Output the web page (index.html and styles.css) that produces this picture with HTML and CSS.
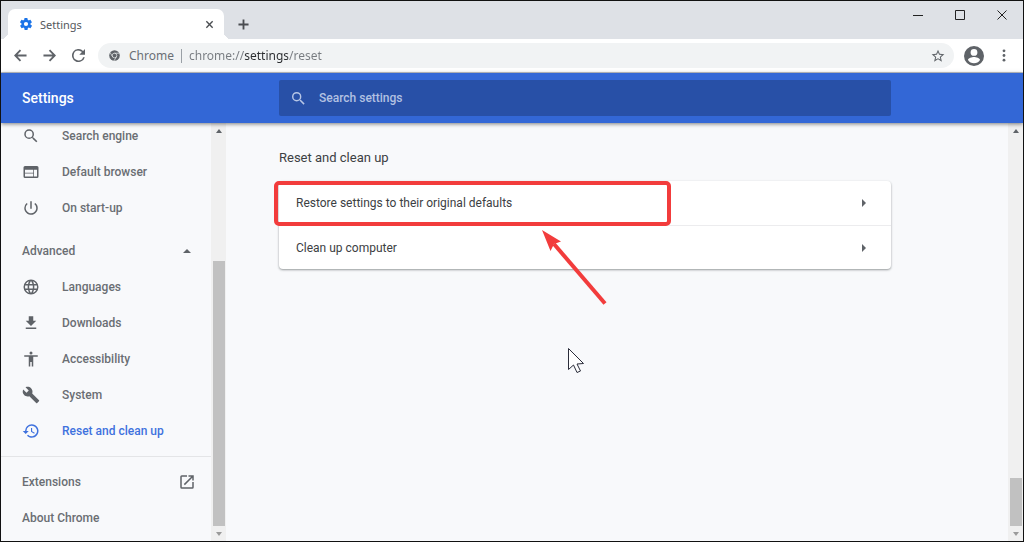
FILE: index.html
```html
<!DOCTYPE html>
<html lang="en">
<head>
<meta charset="UTF-8" />
<meta name="viewport" content="width=device-width, initial-scale=1" />
<title>Settings</title>
<link rel="stylesheet" href="styles.css">
</head>
<body>
<div class="window">
    <div class="titlebar">
        <div class="tab">
            <svg class="tab-icon" viewBox="2 2 20 20" aria-hidden="true"><path d="M19.4 13a7.500 7.500 0 0 0 0-2l2.100-1.600a.5.5 0 0 0 .1-.7l-2-3.400a.5.5 0 0 0-.6-.2l-2.500 1a7.300 7.300 0 0 0-1.700-1l-.4-2.700a.5.5 0 0 0-.5-.4h-4a.5.5 0 0 0-.5.4l-.4 2.700a7.300 7.300 0 0 0-1.700 1l-2.500-1a.5.5 0 0 0-.6.2l-2 3.400a.5.5 0 0 0 .1.700L4.600 11a7.500 7.500 0 0 0 0 2l-2.100 1.600a.5.5 0 0 0-.1.700l2 3.400a.5.5 0 0 0 .6.2l2.500-1a7.300 7.300 0 0 0 1.700 1l.4 2.700a.5.5 0 0 0 .5.4h4a.5.5 0 0 0 .5-.4l.4-2.700a7.300 7.300 0 0 0 1.700-1l2.500 1a.5.5 0 0 0 .6-.2l2-3.400a.5.5 0 0 0-.1-.7zM12 15.500a3.500 3.500 0 1 1 0-7 3.500 3.500 0 0 1 0 7z"/></svg>
            <span class="tab-title">Settings</span>
            <button class="tab-close" aria-label="Close tab"><svg class="stroke" viewBox="0 0 10 10"><path d="M1.500 1.500l7 7M8.500 1.500l-7 7"/></svg></button>
        </div>
        <button class="new-tab" aria-label="New tab"><svg class="stroke" viewBox="0 0 12 12"><path d="M6 .5v11M.5 6h11"/></svg></button>
        <div class="window-buttons">
            <button aria-label="Minimise"><svg viewBox="0 0 10 10"><path d="M0 5.500h10"/></svg></button>
            <button aria-label="Maximise"><svg viewBox="0 0 10 10"><path d="M.5.5h9v9h-9z"/></svg></button>
            <button aria-label="Close"><svg viewBox="0 0 10 10"><path d="M.5.5l9 9M9.500.5l-9 9"/></svg></button>
        </div>
    </div>

    <div class="toolbar">
        <button class="tool" aria-label="Back"><svg class="stroke" viewBox="0 0 14 14"><path d="M13.500 7H1.500M7 1.300L1.300 7 7 12.700"/></svg></button>
        <button class="tool" aria-label="Forward"><svg class="stroke" viewBox="0 0 14 14"><path d="M.5 7h12M7 1.300L12.700 7 7 12.700"/></svg></button>
        <button class="tool" aria-label="Reload"><svg viewBox="4 4 16 16"><path d="M17.650 6.350A8 8 0 1 0 19.730 14h-2.080A6 6 0 1 1 12 6c1.660 0 3.140.69 4.220 1.780L13 11h7V4z"/></svg></button>
        <div class="omnibox">
            <svg class="chrome-icon" viewBox="0 0 24 24" aria-hidden="true">
                <circle cx="12" cy="12" r="11.500" fill="#5f6368"/>
                <circle cx="12" cy="12" r="5" fill="none" stroke="#f1f3f4" stroke-width="1.500"/>
                <path d="M12 7h10.500M7.700 14.500L2.500 5.700M16.300 14.500L11 23.500" stroke="#f1f3f4" stroke-width="1.500"/>
            </svg>
            <label class="scheme" for="address">Chrome</label>
            <input class="address" id="address" type="text" value="chrome://settings/reset" spellcheck="false">
            <button class="star" aria-label="Bookmark this page"><svg viewBox="1 1 22 22"><path d="M22 9.240l-7.190-.62L12 2 9.190 8.630 2 9.240l5.460 4.730L5.820 21 12 17.270 18.180 21l-1.630-7.030zM12 15.400l-3.760 2.270 1-4.280-3.320-2.880 4.380-.38L12 6.100l1.710 4.040 4.380.38-3.320 2.880 1 4.280z"/></svg></button>
        </div>
        <button class="profile" aria-label="Profile"><svg viewBox="2 2 20 20"><path d="M12 2a10 10 0 1 0 0 20 10 10 0 0 0 0-20zm0 3a3.400 3.400 0 1 1 0 6.800A3.400 3.400 0 0 1 12 5zm0 14.200a7.200 7.200 0 0 1-6-3.220c.03-1.990 4-3.080 6-3.080s5.970 1.090 6 3.080a7.200 7.200 0 0 1-6 3.220z"/></svg></button>
        <button class="more" aria-label="Menu"><svg viewBox="0 0 4 14"><circle cx="2" cy="2" r="1.500"/><circle cx="2" cy="7" r="1.500"/><circle cx="2" cy="12" r="1.500"/></svg></button>
    </div>

    <header class="header">
        <h1>Settings</h1>
        <div class="search">
            <label for="search" aria-label="Search settings"><svg viewBox="3 3 18 18"><path d="M15.500 14h-.79l-.28-.27A6.470 6.470 0 0 0 16 9.500 6.500 6.500 0 1 0 9.500 16c1.610 0 3.090-.59 4.230-1.570l.27.28v.79l5 4.990L20.490 19zm-6 0a4.500 4.500 0 1 1 0-9 4.500 4.500 0 0 1 0 9z"/></svg></label>
            <input id="search" type="text" placeholder="Search settings">
        </div>
    </header>

    <div class="content">
        <nav class="sidebar">
            <div class="menu">
                <a href="#search-engine"><svg viewBox="0 0 24 24"><path d="M15.500 14h-.79l-.28-.27A6.470 6.470 0 0 0 16 9.500 6.500 6.500 0 1 0 9.500 16c1.610 0 3.090-.59 4.230-1.570l.27.28v.79l5 4.990L20.490 19zm-6 0a4.500 4.500 0 1 1 0-9 4.500 4.500 0 0 1 0 9z"/></svg>Search engine</a>
                <a href="#browser"><svg viewBox="0 0 24 24"><path d="M20 4H4a2 2 0 0 0-2 2v12a2 2 0 0 0 2 2h16a2 2 0 0 0 2-2V6a2 2 0 0 0-2-2zm-5 14H4v-4h11zm0-5H4V9h11zm5 5h-4V9h4z"/></svg>Default browser</a>
                <a href="#startup"><svg viewBox="0 0 24 24"><path d="M13 3h-2v10h2zm4.830 2.170l-1.420 1.420A6.920 6.920 0 0 1 19 12a7 7 0 1 1-11.420-5.420L6.170 5.170A8.930 8.930 0 0 0 3 12a9 9 0 1 0 14.830-6.830z"/></svg>On start-up</a>
                <button class="advanced" aria-expanded="true">Advanced<span class="up"></span></button>
                <a href="#languages"><svg viewBox="0 0 24 24"><path d="M11.990 2a10 10 0 1 0 .02 20 10 10 0 0 0-.02-20zm6.930 6h-2.950a15.650 15.650 0 0 0-1.380-3.560A8.030 8.030 0 0 1 18.920 8zM12 4.040c.83 1.200 1.480 2.530 1.910 3.960h-3.820c.43-1.430 1.080-2.760 1.910-3.960zM4.260 14a8.200 8.200 0 0 1 0-4h3.380a16.500 16.500 0 0 0 0 4zm.82 2h2.950c.32 1.250.78 2.450 1.380 3.560A7.990 7.990 0 0 1 5.080 16zm2.950-8H5.080a7.990 7.990 0 0 1 4.330-3.560A15.650 15.650 0 0 0 8.030 8zM12 19.960A14 14 0 0 1 10.090 16h3.820A14 14 0 0 1 12 19.960zM14.340 14H9.660a14.700 14.700 0 0 1 0-4h4.680a14.700 14.700 0 0 1 0 4zm.25 5.560c.6-1.110 1.060-2.310 1.380-3.560h2.950a8.030 8.030 0 0 1-4.330 3.560zM16.360 14a16.500 16.500 0 0 0 0-4h3.380a8.200 8.200 0 0 1 0 4z"/></svg>Languages</a>
                <a href="#downloads"><svg viewBox="0 0 24 24"><path d="M19 9h-4V3H9v6H5l7 7zM5 18v2h14v-2z"/></svg>Downloads</a>
                <a href="#accessibility"><svg viewBox="0 0 24 24"><path d="M12 2a2 2 0 1 1 0 4 2 2 0 0 1 0-4zm9 7h-6v13h-2v-6h-2v6H9V9H3V7h18z"/></svg>Accessibility</a>
                <a href="#system"><svg viewBox="0 0 24 24"><path d="M22.700 19l-9.100-9.100c.9-2.300.4-5-1.500-6.900-2-2-5-2.400-7.400-1.300L9 6 6 9 1.600 4.700C.4 7.100.9 10.100 2.900 12.100c1.900 1.900 4.600 2.400 6.900 1.500l9.100 9.100c.4.4 1 .4 1.400 0l2.300-2.300c.5-.4.5-1.100.1-1.400z"/></svg>System</a>
                <a class="selected" href="#reset" aria-current="page"><svg viewBox="0 0 24 24"><path d="M13 3a9 9 0 0 0-9 9H1l3.890 3.890.07.14L9 12H6a7 7 0 1 1 2.060 4.940l-1.420 1.420A9 9 0 1 0 13 3zm-1 5v5l4.280 2.540.72-1.210-3.500-2.080V8z"/></svg>Reset and clean up</a>
                <hr>
                <a class="plain" href="#extensions">Extensions<svg viewBox="0 0 24 24"><path d="M19 19H5V5h7V3H5a2 2 0 0 0-2 2v14a2 2 0 0 0 2 2h14a2 2 0 0 0 2-2v-7h-2zM14 3v2h3.590l-9.830 9.830 1.410 1.410L19 6.410V10h2V3z"/></svg></a>
                <a class="plain" href="#about">About Chrome</a>
            </div>
        </nav>
        <div class="scrollbar side" aria-hidden="true"><span class="up"></span><span class="thumb"></span><span class="down"></span></div>

        <main class="main">
            <h2>Reset and clean up</h2>
            <div class="card">
                <button class="row highlighted">Restore settings to their original defaults<span class="next"></span></button>
                <button class="row">Clean up computer<span class="next"></span></button>
                <svg class="arrow" viewBox="0 0 66 78" aria-hidden="true"><path class="shaft" d="M63 73.500L12 14"/><path class="head" d="M0 0L19 11.500 12 14 8.500 21z"/></svg>
            </div>
            <svg class="cursor" viewBox="0 0 17 26" aria-hidden="true"><path d="M.5.5v21l5-4.500 3.500 7.500 3.500-1.500-3.500-7 6.500-.5z"/></svg>
        </main>
        <div class="scrollbar page" aria-hidden="true"><span class="up"></span><span class="thumb"></span><span class="down"></span></div>
    </div>
</div>
</body>
</html>
```

FILE: styles.css
```css
*, *::before, *::after {
    box-sizing: border-box;
}
body {
    margin: 0;
    font-family: Roboto, "Liberation Sans", sans-serif;
    font-size: 12px;
    color: #3c4043;
}
button, input {
    font: inherit;
    color: inherit;
    border: none;
    background: none;
    padding: 0;
    margin: 0;
}
button {
    display: flex;
    align-items: center;
    justify-content: center;
    cursor: pointer;
}
svg {
    display: block;
    flex: none;
    fill: #5f6368;
}
.stroke {
    fill: none;
    stroke: #4a4d51;
    stroke-width: 2;
}
.window {
    display: flex;
    flex-direction: column;
    height: 100vh;
    border: 1px solid #111;
    background: #f8f9fb;
    overflow: hidden;
}

/* tab strip */
.titlebar {
    display: flex;
    flex: none;
    height: 38px;
    padding: 8px 0 0 7px;
    background: #dee1e6;
    font-family: "Noto Sans", "Open Sans", sans-serif;
}
.tab {
    position: relative;
    display: flex;
    align-items: center;
    width: 216px;
    padding: 0 10px 0 12px;
    background: #fff;
    border-radius: 7px 7px 0 0;
    font-size: 11px;
    color: #55585c;
}
.tab::before, .tab::after {
    content: "";
    position: absolute;
    bottom: 0;
    width: 7px;
    height: 7px;
}
.tab::before {
    right: 100%;
    background: radial-gradient(circle at 0 0, transparent 7px, #fff 7px);
}
.tab::after {
    left: 100%;
    background: radial-gradient(circle at 100% 0, transparent 7px, #fff 7px);
}
.tab-icon {
    width: 12px;
    height: 12px;
    fill: #1a73e8;
}
.tab-title {
    flex: 1;
    margin-left: 8px;
}
.tab-close svg {
    width: 9px;
    height: 9px;
    stroke-width: 1.5;
}
.new-tab {
    width: 38px;
    height: 30px;
}
.new-tab svg {
    width: 11px;
    height: 11px;
}
.window-buttons {
    display: flex;
    margin-left: auto;
}
.window-buttons button {
    width: 42px;
    height: 12px;
}
.window-buttons svg {
    width: 10px;
    height: 10px;
    fill: none;
    stroke: #222;
}

/* address bar */
.toolbar {
    display: flex;
    align-items: center;
    flex: none;
    height: 34px;
    padding: 0 5px;
    background: #fff;
    border-bottom: 1px solid #c4c7cc;
    font-family: "Noto Sans", "Open Sans", sans-serif;
}
.tool {
    width: 29px;
    height: 29px;
}
.tool svg {
    width: 13px;
    height: 13px;
}
.tool .stroke {
    stroke: #5f6368;
}
.omnibox {
    display: flex;
    align-items: center;
    flex: 1;
    height: 25px;
    margin-left: 5px;
    padding: 0 9px 0 11px;
    border-radius: 13px;
    background: #f1f3f4;
    color: #6b6f74;
}
.chrome-icon {
    width: 11px;
    height: 11px;
}
.scheme {
    margin-left: 9px;
    padding-right: 7px;
    border-right: 1px solid #9aa0a6;
    line-height: 14px;
}
.address {
    flex: 1;
    min-width: 0;
    margin-left: 7px;
    /* the host part is darker than the rest of the address */
    background: linear-gradient(to right, #777b80 55px, #2b2d30 55px 99px, #777b80 99px);
    -webkit-background-clip: text;
    background-clip: text;
    -webkit-text-fill-color: transparent;
}
.star svg {
    width: 14px;
    height: 14px;
}
.profile {
    width: 20px;
    margin-left: 10px;
}
.profile svg {
    width: 20px;
    height: 20px;
}
.more {
    width: 29px;
    margin-left: 5px;
}
.more svg {
    width: 4px;
    height: 13px;
}

/* blue settings bar */
.header {
    position: relative;
    z-index: 1;
    display: flex;
    align-items: center;
    flex: none;
    height: 50px;
    padding-left: 21px;
    background: #3367d6;
    box-shadow: 0 1px 4px rgba(0, 0, 0, 0.5);
}
.header h1 {
    flex: none;
    width: 257px;
    margin: 0;
    font-size: 14px;
    font-weight: 500;
    color: #fff;
}
.search {
    display: flex;
    align-items: center;
    flex: 0 1 612px;
    height: 36px;
    padding-left: 13px;
    border-radius: 2px;
    background: #2850a7;
}
.search svg {
    width: 13px;
    height: 13px;
    fill: #b7c6e6;
}
.search input {
    flex: 1;
    min-width: 0;
    margin-left: 14px;
    color: #fff;
    font-weight: 500;
}
.search input::placeholder {
    color: #b2c1e2;
    opacity: 1;
}

.content {
    display: flex;
    flex: 1;
    min-height: 0;
}
.sidebar {
    flex: none;
    width: 210px;
    overflow: hidden;
    font-weight: 500;
}
/* list is scrolled down a little under the bar */
.menu {
    margin-top: -5px;
}
.menu a, .advanced {
    display: flex;
    align-items: center;
    width: 100%;
    height: 36px;
    padding: 0 15px 0 21px;
    color: #6a6e73;
    text-decoration: none;
}
.menu svg {
    width: 18px;
    height: 18px;
    margin-right: 22px;
}
.menu .selected {
    color: #3f72de;
}
.selected svg {
    fill: #3f72de;
}
.menu .plain, .menu .advanced {
    justify-content: space-between;
}
.menu .plain svg {
    margin-right: 0;
}
.advanced {
    margin-top: 7px;
}
.advanced .up {
    margin-right: 5px;
}
.menu hr {
    height: 1px;
    margin: 7px 0;
    border: none;
    background: #e4e5e7;
}
.up, .down, .next {
    flex: none;
    border: 4px solid transparent;
}
.up {
    border-top: none;
    border-bottom-color: #5f6368;
}
.down {
    border-bottom: none;
    border-top-color: #9a9a9a;
}
.next {
    border-right: none;
    border-left-color: #5f6368;
}

.scrollbar {
    display: flex;
    flex-direction: column;
    align-items: center;
    flex: none;
    width: 15px;
    padding: 6px 0 5px;
    background: #f0f0f0;
}
.scrollbar .up, .scrollbar .down {
    border-left-width: 3px;
    border-right-width: 3px;
}
.thumb {
    width: 12px;
    margin: auto 0 6px;
    background: #c1c1c1;
}
.side .thumb {
    height: 65%;
}
.page .thumb {
    height: 48px;
}

.main {
    position: relative;
    flex: 1;
    min-width: 0;
    padding: 27px 54px 0 53px;
}
.main h2 {
    margin: 0 0 15px;
    font-size: 13px;
    font-weight: 400;
    line-height: 16px;
}
.card {
    position: relative;
    max-width: 612px;
    border-radius: 4px;
    background: #fff;
    box-shadow: 0 1px 2px rgba(60, 64, 67, 0.4), 0 1px 3px rgba(60, 64, 67, 0.15);
}
.row {
    position: relative;
    justify-content: space-between;
    width: 100%;
    height: 44px;
    padding: 0 25px 0 17px;
}
.row + .row {
    border-top: 1px solid #ececee;
}

/* red marks and pointer over the page */
.highlighted::after {
    content: "";
    position: absolute;
    top: 0;
    left: -5px;
    width: 397px;
    height: 45px;
    border: 4px solid #f23c3c;
    border-radius: 5px;
    z-index: 1;
}
.arrow {
    position: absolute;
    top: 49px;
    left: 263px;
    width: 66px;
    height: 78px;
}
.shaft {
    stroke: #f23c3c;
    stroke-width: 4;
}
.head {
    fill: #f23c3c;
}
.cursor {
    position: absolute;
    top: 225px;
    left: 342px;
    width: 17px;
    height: 26px;
    fill: #fff;
    stroke: #2b2d3a;
}
```
